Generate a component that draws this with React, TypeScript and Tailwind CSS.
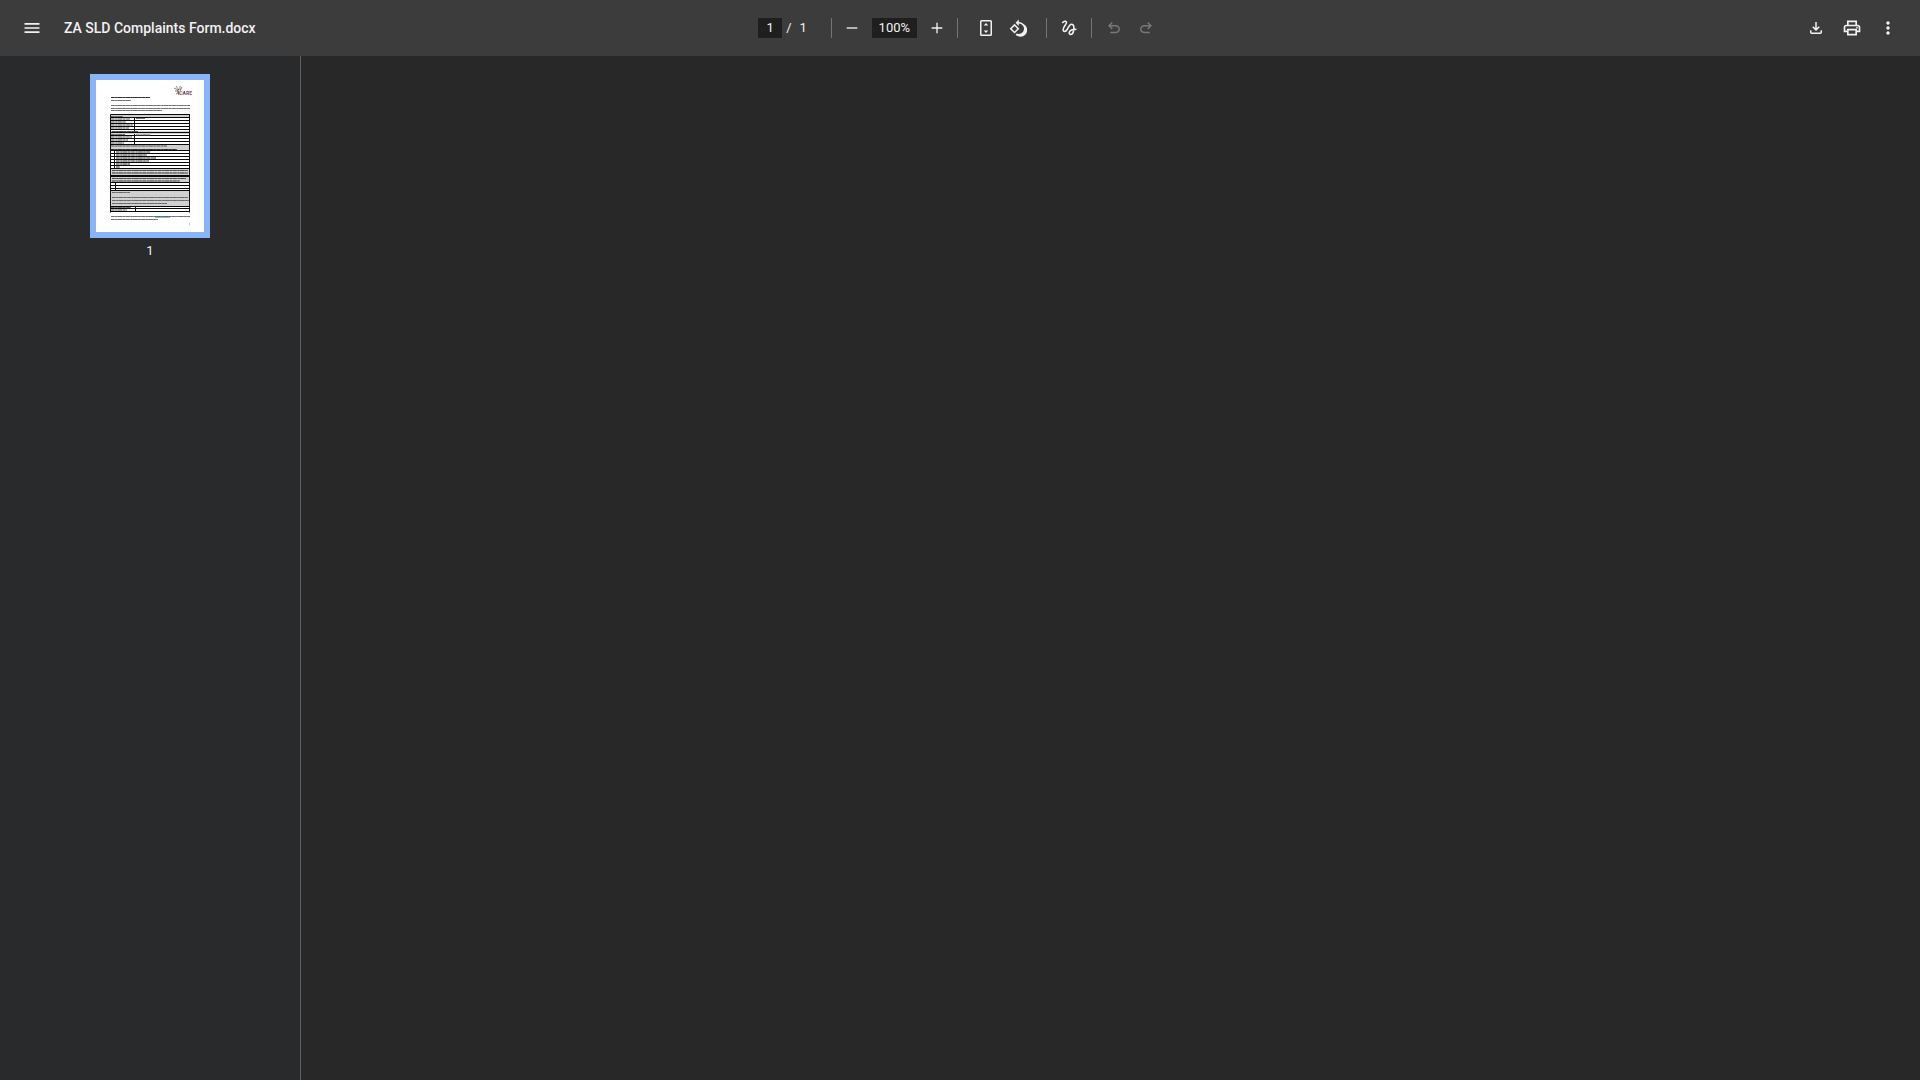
import type { ReactNode } from "react";

const GREY_ROWS = [[115, 118], [131, 134], [145, 151], [169, 183], [191, 207]];
const LINES = [115, 118, 121, 124, 127, 130, 133, 136, 139, 142, 145, 151, 154, 157, 160, 163, 166, 169, 176, 177, 183, 186, 189, 191, 207, 209, 212];

function Icon({ children, size = 20, box = "0 -960 960 960" }: { children: ReactNode; size?: number; box?: string }) {
  return (
    <svg width={size} height={size} viewBox={box} fill="currentColor" aria-hidden="true">
      {children}
    </svg>
  );
}

function IconButton({ label, children, disabled = false }: { label: string; children: ReactNode; disabled?: boolean }) {
  return (
    <button aria-label={label} disabled={disabled} className="flex size-8 shrink-0 items-center justify-center rounded-full hover:bg-white/10 disabled:text-[#777777]">
      {children}
    </button>
  );
}

function Divider({ className = "" }: { className?: string }) {
  return <div className={`h-5 w-px shrink-0 bg-[#757575] ${className}`} />;
}

function Words({ x, y, width, color = "#555", weight = 0.9 }: { x: number; y: number; width: number; color?: string; weight?: number }) {
  return (
    <g fill="none" stroke={color} strokeWidth={weight}>
      <path d={`M${x} ${y}h${width}`} opacity=".65" />
      <path d={`M${x} ${y}h${width}`} strokeDasharray="3.3 1.2 1.6 .7 4.4 .9 2.1 1.1" opacity=".7" />
    </g>
  );
}

function PageThumbnail() {
  return (
    <svg width="108" height="152" viewBox="96 80 108 152" className="block bg-white" role="img" aria-label="Complaints form page">
      <g fill="none" strokeWidth=".7">
        <path d="M174 88l4 2M176 86l3 4M180 86v4M175 91h4M176 94l3-2M182 87l-2 4M179 94a3 3 0 0 1 0-5" stroke="#555" />
      </g>
      <text x="178" y="95" fontSize="5" fontWeight="700" fill="#444">
        i<tspan fill="#b8434f">C</tspan>A<tspan fill="#51508a">R</tspan><tspan fill="#b8434f">E</tspan>
      </text>
      <Words x={111} y={97.5} width={39} color="#111" weight={1.2} />
      <Words x={111} y={100.5} width={20} />
      <Words x={111} y={105.5} width={79} />
      <Words x={111} y={108.5} width={79} />
      <Words x={111} y={110.5} width={51} />
      {GREY_ROWS.map(([a, b]) => <rect key={a} x="111" y={a} width="79" height={b - a} fill="#d0d0d0" />)}
      {LINES.map((y) => <path key={y} d={`M110.5 ${y - 0.5}h79.5`} stroke="#0a0a0a" strokeWidth="1" />)}
      <path d="M110.5 114.5v98M189.500 114.5v98M134.500 118v13M134.500 134v11M114.5 151v18M115.5 183v8M135.500 207v5" stroke="#111" fill="none" />
      {[116.5, 119, 122, 125, 128, 134.5, 137, 140, 143, 207.5, 210].map((y, i) => <Words key={y} x={111} y={y} width={12 + ((i * 7) % 11)} />)}
      <Words x={136} y={118.5} width={9} />
      <Words x={136} y={135} width={14} />
      <Words x={111} y={146} width={56} />
      <Words x={111} y={149.5} width={66} color="#111" />
      {[131.5, 170.5, 173, 178.5, 181].map((y, i) => <Words key={y} x={112} y={y} width={[26, 76, 76, 74, 68][i]} color="#333" />)}
      {[152, 155, 158, 161, 164, 167].map((y, i) => <Words key={y} x={116} y={y} width={[34, 31, 40, 33, 14, 4][i]} color="#333" />)}
      {[192.5, 197.5, 200.5, 203.5].map((y, i) => <Words key={y} x={112} y={y} width={[18, 76, 77, 55][i]} />)}
      <Words x={111} y={216.5} width={79} />
      <path d="M155 217h15" stroke="#277885" />
      <Words x={111} y={219.5} width={47} />
      <path d="M189.5 223v2" stroke="#999" strokeWidth=".6" />
    </svg>
  );
}

export default function App() {
  return (
    <div className="flex h-screen flex-col bg-[#282828] font-['Roboto',sans-serif] text-[#f1f1f1]">
      <header className="grid h-14 shrink-0 grid-cols-[1fr_auto_1fr] items-center bg-[#3c3c3c] px-4">
        <div className="flex items-center gap-4">
          <IconButton label="Menu">
            <Icon box="0 0 24 24"><path d="M3 18h18v-2H3v2zm0-5h18v-2H3v2zm0-7v2h18V6H3z" /></Icon>
          </IconButton>
          <h1 className="text-sm font-medium">ZA SLD Complaints Form.docx</h1>
        </div>
        <div className="flex items-center text-[13px]">
          <input aria-label="Page number" defaultValue="1" className="h-5 w-6 bg-[#1f1f1f] pb-0.5 text-center outline-none" />
          <span className="ml-1">/</span>
          <span className="ml-2">1</span>
          <Divider className="mr-1 ml-6" />
          <IconButton label="Zoom out"><Icon size={16} box="0 0 24 24"><path d="M4 11h16v2H4z" /></Icon></IconButton>
          <input aria-label="Zoom level" defaultValue="100%" className="mx-1 h-5 w-[45px] bg-[#1f1f1f] pb-0.5 text-center outline-none" />
          <IconButton label="Zoom in"><Icon size={16} box="0 0 24 24"><path d="M11 4h2v7h7v2h-7v7h-2v-7H4v-2h7z" /></Icon></IconButton>
          <Divider className="mr-3 ml-1" />
          <IconButton label="Fit to page"><Icon box="0 0 20 20"><path fillRule="evenodd" d="M5.500 2h9A1.500 1.500 0 0 1 16 3.500v13a1.500 1.500 0 0 1-1.500 1.500h-9A1.500 1.500 0 0 1 4 16.500v-13A1.500 1.500 0 0 1 5.500 2zm0 1.500v13h9v-13zM10 5l2.300 2.600H7.700zM10 15l2.300-2.600H7.700z" /></Icon></IconButton>
          <IconButton label="Rotate counterclockwise"><Icon size={18} box="0 0 24 24"><path d="M7.340 6.410.860 12.900l6.490 6.480 6.490-6.480-6.500-6.490zM3.690 12.900l3.660-3.660L11 12.900l-3.660 3.660-3.650-3.660zm15.670-6.260A8.950 8.950 0 0 0 13 4V.760L8.760 5 13 9.240V6a7 7 0 1 1-2.640 13.480l-1.490 1.490A9 9 0 1 0 19.360 6.640z" /></Icon></IconButton>
          <Divider className="mr-1.5 ml-3" />
          <IconButton label="Draw"><Icon box="0 0 24 24"><path fill="none" stroke="currentColor" strokeWidth="1.9" d="M4 6C5.500 4 8.500 3 9 5c.5 2.500-4 5-4 9 0 3 3 3 5-.5 1.500-2.500 2.500-6 5-6 3.500 0 3 4.500 2.500 7.500-.5 3-2 4.800-3.700 4.800-1.800 0-2-2.300-.8-3.800 1.500-2 4.500-2.500 8-2.500" /></Icon></IconButton>
          <Divider className="mx-1.5" />
          <IconButton label="Undo" disabled><Icon size={18}><path d="M280-200v-80h284q63 0 109.500-40T720-420q0-60-46.500-100T564-560H312l104 104-56 56-200-200 200-200 56 56-104 104h252q97 0 166.500 63T800-420q0 94-69.500 157T564-200H280Z" /></Icon></IconButton>
          <IconButton label="Redo" disabled><Icon size={18}><path d="M396-200q-97 0-166.500-63T160-420q0-94 69.500-157T396-640h252L544-744l56-56 200 200-200 200-56-56 104-104H396q-63 0-109.500 40T240-420q0 60 46.500 100T396-280h284v80H396Z" /></Icon></IconButton>
        </div>
        <div className="flex justify-end gap-1">
          <IconButton label="Download"><Icon size={18}><path d="M480-320 280-520l56-58 104 104v-326h80v326l104-104 56 58-200 200ZM240-160q-33 0-56.500-23.500T160-240v-120h80v120h480v-120h80v120q0 33-23.500 56.500T720-160H240Z" /></Icon></IconButton>
          <IconButton label="Print"><Icon><path d="M640-640v-120H320v120h-80v-200h480v200h-80Zm-480 80h640-640Zm560 100q17 0 28.500-11.500T760-500q0-17-11.500-28.500T720-540q-17 0-28.500 11.500T680-500q0 17 11.500 28.500T720-460Zm-80 260v-160H320v160h320Zm80 80H240v-160H80v-240q0-51 35-85.500t85-34.500h560q51 0 85.500 34.500T880-520v240H720v160Zm80-240v-160q0-17-11.500-28.500T760-560H200q-17 0-28.500 11.500T160-520v160h80v-80h480v80h80Z" /></Icon></IconButton>
          <IconButton label="More actions"><Icon><path d="M480-160q-33 0-56.500-23.500T400-240q0-33 23.500-56.500T480-320q33 0 56.500 23.500T560-240q0 33-23.500 56.500T480-160Zm0-240q-33 0-56.500-23.500T400-480q0-33 23.500-56.500T480-560q33 0 56.500 23.500T560-480q0 33-23.500 56.500T480-400Zm0-240q-33 0-56.500-23.500T400-720q0-33 23.500-56.500T480-800q33 0 56.500 23.500T560-720q0 33-23.500 56.500T480-640Z" /></Icon></IconButton>
        </div>
      </header>
      <div className="flex min-h-0 flex-1">
        <aside className="flex w-[301px] shrink-0 flex-col items-center border-r border-[#606060] bg-[#282a2b] pt-[18px]">
          <button aria-label="Go to page 1" className="border-6 border-[#8ab4f8]"><PageThumbnail /></button>
          <span className="mt-[5px] text-[13px] leading-4">1</span>
        </aside>
        <main className="min-w-0 flex-1 bg-[#282828]" aria-label="Document" />
      </div>
    </div>
  );
}
